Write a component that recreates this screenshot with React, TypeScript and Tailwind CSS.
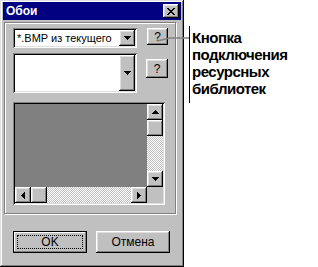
import React from "react";

const raised =
  "shadow-[inset_-1px_-1px_#000,inset_1px_1px_#fff,inset_-2px_-2px_#808080,inset_2px_2px_#dfdfdf]";
const sunken =
  "shadow-[inset_1px_1px_#808080,inset_-1px_-1px_#fff,inset_2px_2px_#000,inset_-2px_-2px_#dfdfdf]";

const Tri = ({ dir }: { dir: "up" | "down" | "left" | "right" }) => {
  const pts =
    dir === "down"
      ? "0,0 7,0 3.5,4"
      : dir === "up"
      ? "0,4 7,4 3.5,0"
      : dir === "left"
      ? "4,0 4,7 0,3.5"
      : "0,0 0,7 4,3.5";
  const w = dir === "up" || dir === "down" ? 7 : 4;
  const h = dir === "up" || dir === "down" ? 4 : 7;
  return (
    <svg width={w} height={h} viewBox={`0 0 ${w} ${h}`} shapeRendering="crispEdges">
      <polygon points={pts} fill="#000" />
    </svg>
  );
};

const SBtn = ({ dir }: { dir: "up" | "down" | "left" | "right" }) => (
  <div className={`w-[16px] h-[16px] shrink-0 bg-[#c0c0c0] flex items-center justify-center ${raised}`}>
    <Tri dir={dir} />
  </div>
);

const Thumb = () => <div className={`w-[16px] h-[16px] shrink-0 bg-[#c0c0c0] ${raised}`} />;

const dither =
  "bg-[repeating-conic-gradient(#c0c0c0_0%_25%,#ffffff_0%_50%)] bg-[length:2px_2px]";

export default function App() {
  return (
    <div
      className="relative w-[318px] h-[267px] bg-white flex"
      style={{ fontFamily: '"Liberation Sans", Arial, sans-serif' }}
    >
      {/* Dialog */}
      <div
        className={`w-[184px] h-[267px] shrink-0 bg-[#c0c0c0] p-[3px] pt-[2px] flex flex-col shadow-[inset_-1px_-1px_#000,inset_1px_1px_#dfdfdf,inset_-2px_-2px_#808080,inset_2px_2px_#fff]`}
      >
        {/* Title bar */}
        <div className="h-[18px] bg-[#000080] flex items-center pl-[3px] pr-[2px]">
          <span className="text-white text-[12px] font-bold leading-none flex-1">Обои</span>
          <div className={`w-[16px] h-[14px] bg-[#c0c0c0] flex items-center justify-center ${raised}`}>
            <svg width="8" height="7" viewBox="0 0 8 7" shapeRendering="crispEdges">
              <path d="M0 0h2v1H0zM6 0h2v1H6zM1 1h2v1H1zM5 1h2v1H5zM2 2h4v1H2zM3 3h2v1H3zM2 4h4v1H2zM1 5h2v1H1zM5 5h2v1H5zM0 6h2v1H0zM6 6h2v1H6z" fill="#000" />
            </svg>
          </div>
        </div>

        {/* Etched frame */}
        <div className="mt-[2px] ml-[1px] w-[172px] h-[192px] border border-[#808080] shadow-[1px_1px_0_#fff,inset_1px_1px_0_#fff] pt-[5px] pl-[8px] flex flex-col">
          {/* Row 1 */}
          <div className="flex items-start">
            <div className={`w-[124px] h-[20px] bg-white flex items-center p-[2px] ${sunken}`}>
              <span className="flex-1 pl-[2px] text-[11px] text-black leading-none whitespace-nowrap overflow-hidden">
                *.BMP из текущего
              </span>
              <SBtn dir="down" />
            </div>
            <div className={`ml-[10px] w-[21px] h-[17px] bg-[#c0c0c0] flex items-center justify-center text-[12px] text-black ${raised}`}>
              ?
            </div>
          </div>
          {/* Row 2 */}
          <div className="flex items-start mt-[5px]">
            <div className={`w-[124px] h-[40px] bg-white flex p-[2px] ${sunken}`}>
              <div className="flex-1" />
              <div className={`w-[16px] h-full bg-[#c0c0c0] flex items-center justify-center ${raised}`}>
                <Tri dir="down" />
              </div>
            </div>
            <div className={`ml-[9px] mt-[6px] w-[22px] h-[19px] bg-[#c0c0c0] flex items-center justify-center text-[12px] text-black ${raised}`}>
              ?
            </div>
          </div>
          {/* Preview */}
          <div className={`mt-[9px] w-[152px] h-[103px] p-[2px] flex flex-col bg-[#808080] ${sunken}`}>
            <div className="flex flex-1 min-h-0">
              <div className="flex-1 bg-[#808080]" />
              <div className="w-[16px] flex flex-col">
                <SBtn dir="up" />
                <Thumb />
                <div className={`flex-1 ${dither}`} />
                <SBtn dir="down" />
              </div>
            </div>
            <div className="h-[16px] flex">
              <SBtn dir="left" />
              <Thumb />
              <div className={`flex-1 ${dither}`} />
              <SBtn dir="right" />
              <div className="w-[16px] bg-[#c0c0c0]" />
            </div>
          </div>
        </div>

        {/* Buttons */}
        <div className="flex mt-[17px] ml-[10px]">
          <div className="w-[74px] h-[22px] border border-black bg-[#c0c0c0]">
            <div className={`w-full h-full p-[3px] shadow-[inset_-1px_-1px_#808080,inset_1px_1px_#fff]`}>
              <div className="w-full h-full border border-dotted border-black flex items-center justify-center text-[12px] text-black leading-none">
                OK
              </div>
            </div>
          </div>
          <div
            className={`ml-[9px] w-[74px] h-[22px] bg-[#c0c0c0] flex items-center justify-center text-[12px] text-black leading-none ${raised}`}
          >
            Отмена
          </div>
        </div>
      </div>

      {/* Annotation */}
      <div className="ml-[5px] mt-[26px] h-[77px] border-l border-black pl-[2px] pt-[3px]">
        <div className="text-[15px] font-bold leading-[17px] tracking-[-0.5px] text-black">
          Кнопка
          <br />
          подключения
          <br />
          ресурсных
          <br />
          библиотек
        </div>
      </div>

      {/* Leader line */}
      <svg className="absolute left-0 top-0 pointer-events-none" width="318" height="267">
        <polyline points="157,41 170,38 189,38" fill="none" stroke="#808080" strokeWidth="1.5" />
      </svg>
    </div>
  );
}
